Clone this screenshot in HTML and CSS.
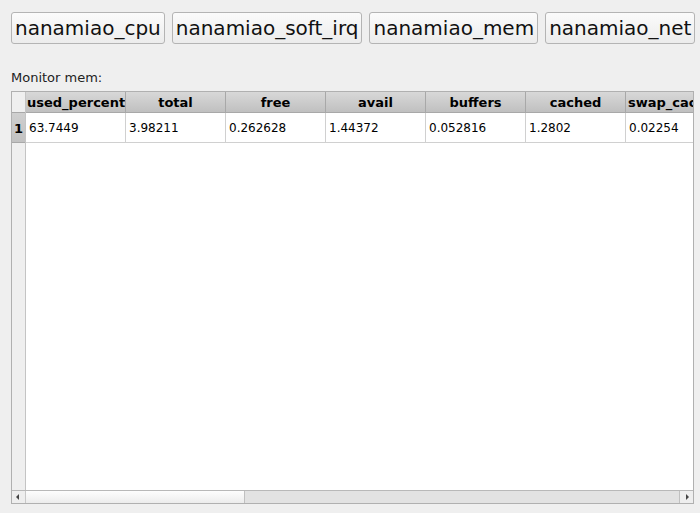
FILE: index.html
```html
<!DOCTYPE html>
<html>
<head>
<meta charset="utf-8">
<link rel="stylesheet" href="styles.css">
</head>
<body>
<div class="app">
  <div class="tabs">
    <button class="btn">nanamiao_cpu</button>
    <button class="btn">nanamiao_soft_irq</button>
    <button class="btn">nanamiao_mem</button>
    <button class="btn">nanamiao_net</button>
  </div>
  <div class="label">Monitor mem:</div>
  <div class="table">
    <div class="viewport">
      <div class="vhead">
        <div class="corner"></div>
        <div class="rownum">1</div>
        <div class="vfill"></div>
      </div>
      <div class="cells">
        <div class="hrow">
          <div class="hcell">used_percent</div>
          <div class="hcell">total</div>
          <div class="hcell">free</div>
          <div class="hcell">avail</div>
          <div class="hcell">buffers</div>
          <div class="hcell">cached</div>
          <div class="hcell">swap_cached</div>
        </div>
        <div class="drow">
          <div class="dcell">63.7449</div>
          <div class="dcell">3.98211</div>
          <div class="dcell">0.262628</div>
          <div class="dcell">1.44372</div>
          <div class="dcell">0.052816</div>
          <div class="dcell">1.2802</div>
          <div class="dcell">0.02254</div>
        </div>
      </div>
    </div>
    <div class="hscroll">
      <div class="sbtn"><svg width="13" height="12" viewBox="0 0 13 12"><path d="M4 6 L7 3 L7 9 Z" fill="#444"/></svg></div>
      <div class="track">
        <div class="handle"></div>
      </div>
      <div class="sbtn right"><svg width="13" height="12" viewBox="0 0 13 12"><path d="M9 6 L6 3 L6 9 Z" fill="#444"/></svg></div>
    </div>
  </div>
</div>
</body>
</html>
```

FILE: styles.css
```css
html, body {
  margin: 0;
  padding: 0;
  background: #efefef;
}
body {
  font-family: "DejaVu Sans", "Liberation Sans", sans-serif;
  color: #000;
}
.app {
  padding: 12px 6px 0 11px;
}
.tabs {
  display: flex;
  gap: 7px;
}
.btn {
  height: 32px;
  padding: 0 3px;
  font-family: "DejaVu Sans", sans-serif;
  font-size: 20px;
  color: #111;
  border: 1px solid #b4b4b4;
  border-radius: 3px;
  background: linear-gradient(#fbfbfb, #ececec);
  line-height: 28px;
}
.label {
  font-size: 13px;
  margin-top: 26px;
  height: 16px;
  line-height: 16px;
  color: #222;
}
.table {
  margin-top: 5px;
  width: 681px;
  height: 411px;
  border: 1px solid #b0b0b0;
  background: #fff;
  display: flex;
  flex-direction: column;
}
.viewport {
  flex: 1;
  display: flex;
  overflow: hidden;
}
.vhead {
  width: 13px;
  flex: none;
  display: flex;
  flex-direction: column;
  background: #efefef;
  border-right: 1px solid #c4c4c4;
}
.corner {
  height: 20px;
  border-bottom: 1px solid #a8a8a8;
  background: #efefef;
}
.rownum {
  height: 29px;
  border-bottom: 1px solid #a8a8a8;
  background: linear-gradient(#cfcfcf, #c2c2c2);
  font-weight: bold;
  font-size: 13px;
  line-height: 31px;
  text-align: center;
}
.vfill {
  flex: 1;
}
.cells {
  flex: 1;
  overflow: hidden;
}
.hrow, .drow {
  display: flex;
}
.hcell {
  flex: none;
  width: 99px;
  height: 20px;
  border-right: 1px solid #a8a8a8;
  border-bottom: 1px solid #a8a8a8;
  background: linear-gradient(#d8d8d8, #c0c0c0);
  font-weight: bold;
  font-size: 13px;
  line-height: 21px;
  text-align: center;
  white-space: nowrap;
  overflow: hidden;
}
.hcell:first-child {
  text-align: left;
  padding-left: 1px;
  width: 98px;
}
.hcell:last-child {
  text-align: left;
  padding-left: 2px;
  width: 97px;
}
.dcell {
  flex: none;
  width: 96px;
  padding-left: 3px;
  height: 29px;
  border-right: 1px solid #d0d0d0;
  border-bottom: 1px solid #d0d0d0;
  font-size: 12px;
  line-height: 30px;
  white-space: nowrap;
}
.hscroll {
  height: 12px;
  border-top: 1px solid #b8b8b8;
  display: flex;
  background: #e2e2e2;
}
.sbtn {
  width: 13px;
  height: 12px;
  flex: none;
  background: #eeeeee;
  display: flex;
}
.sbtn.right {
  border-left: 1px solid #c0c0c0;
}
.track {
  flex: 1;
  display: flex;
  border-left: 1px solid #c8c8c8;
}
.handle {
  width: 218px;
  height: 12px;
  background: linear-gradient(#fdfdfd, #ececec);
  border-right: 1px solid #c0c0c0;
}
```
